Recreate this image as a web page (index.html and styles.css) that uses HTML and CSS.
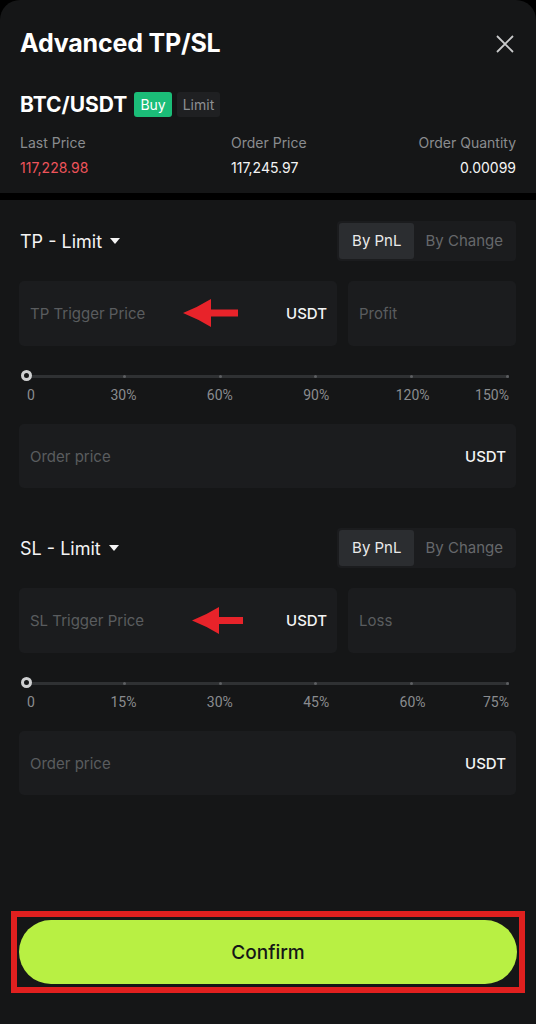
FILE: index.html
```html
<!DOCTYPE html>
<html lang="en">
<head>
    <meta charset="UTF-8">
    <meta name="viewport" content="width=device-width, initial-scale=1.0">
    <title>Advanced TP/SL</title>
    <link rel="stylesheet" href="styles.css">
</head>
<body>
    <!-- Header of the sheet -->
    <header class="sheet-head">
        <div class="title-row">
            <h1>Advanced TP/SL</h1>
            <button class="close" aria-label="Close">
                <svg width="18" height="18" viewBox="0 0 18 18"><path d="M1 1 L17 17 M17 1 L1 17" stroke="#c9cacb" stroke-width="1.8" fill="none"/></svg>
            </button>
        </div>
        <div class="pair">
            <span class="symbol">BTC/USDT</span>
            <span class="tag buy">Buy</span>
            <span class="tag">Limit</span>
        </div>
        <div class="stats">
            <div class="stat">
                <div class="stat-label">Last Price</div>
                <div class="stat-value red">117,228.98</div>
            </div>
            <div class="stat">
                <div class="stat-label">Order Price</div>
                <div class="stat-value">117,245.97</div>
            </div>
            <div class="stat right">
                <div class="stat-label">Order Quantity</div>
                <div class="stat-value">0.00099</div>
            </div>
        </div>
    </header>

    <div class="sep"></div>

    <main class="form">
        <!-- Take profit -->
        <section class="block">
            <div class="block-head">
                <div class="type">TP - Limit <span class="caret"></span></div>
                <div class="seg"><span class="on">By PnL</span><span>By Change</span></div>
            </div>
            <div class="inputs">
                <div class="field">
                    <span class="ph">TP Trigger Price</span>
                    <span class="unit">USDT</span>
                    <svg class="mark tp-mark" width="55" height="28" viewBox="0 0 55 28"><path d="M0 14 Q15 8 28 0 L28 10.5 L55 10.5 L55 17.5 L28 17.5 L28 28 Q15 20 0 14 Z" fill="#e8232a"/></svg>
                </div>
                <div class="field small"><span class="ph">Profit</span></div>
            </div>
            <div class="slider">
                <div class="track">
                    <i></i><i></i><i></i><i></i><i></i><i></i>
                    <span class="thumb"></span>
                </div>
                <div class="marks">
                    <span>0</span><span>30%</span><span>60%</span><span>90%</span><span>120%</span><span>150%</span>
                </div>
            </div>
            <div class="field">
                <span class="ph">Order price</span>
                <span class="unit">USDT</span>
            </div>
        </section>

        <!-- Stop loss -->
        <section class="block">
            <div class="block-head">
                <div class="type">SL - Limit <span class="caret"></span></div>
                <div class="seg"><span class="on">By PnL</span><span>By Change</span></div>
            </div>
            <div class="inputs">
                <div class="field">
                    <span class="ph">SL Trigger Price</span>
                    <span class="unit">USDT</span>
                    <svg class="mark sl-mark" width="51" height="27" viewBox="0 0 51 27"><path d="M0 13.5 Q14 8 27 0 L27 10 L51 10 L51 17 L27 17 L27 27 Q14 19 0 13.5 Z" fill="#e8232a"/></svg>
                </div>
                <div class="field small"><span class="ph">Loss</span></div>
            </div>
            <div class="slider">
                <div class="track">
                    <i></i><i></i><i></i><i></i><i></i><i></i>
                    <span class="thumb"></span>
                </div>
                <div class="marks">
                    <span>0</span><span>15%</span><span>30%</span><span>45%</span><span>60%</span><span>75%</span>
                </div>
            </div>
            <div class="field">
                <span class="ph">Order price</span>
                <span class="unit">USDT</span>
            </div>
        </section>
    </main>

    <footer class="foot">
        <div class="highlight">
            <button class="confirm">Confirm</button>
        </div>
    </footer>
</body>
</html>
```

FILE: styles.css
```css
html {
    background: #000;
}
body {
    margin: 0;
    min-height: 1024px;
    display: flex;
    flex-direction: column;
    font-family: 'Inter', 'Liberation Sans', sans-serif;
    color: #f2f2f2;
    background: #151617;
    border-radius: 20px 20px 0 0;
}

/* Header */
.sheet-head {
    padding: 26px 20px 0;
    height: 167px;
}
.title-row {
    display: flex;
    justify-content: space-between;
    align-items: center;
    height: 34px;
}
h1 {
    margin: 0;
    font-size: 25px;
    font-weight: 700;
    letter-spacing: -0.2px;
    color: #fff;
}
.close {
    background: none;
    border: none;
    padding: 0;
    margin-right: 2px;
    margin-top: 2px;
    width: 18px;
    height: 18px;
}
.pair {
    display: flex;
    align-items: center;
    gap: 5px;
    margin-top: 32px;
    height: 25px;
}
.symbol {
    font-size: 21px;
    font-weight: 700;
    color: #fff;
    margin-right: 2px;
}
.tag {
    height: 25px;
    line-height: 25px;
    padding: 0 6px;
    border-radius: 3px;
    font-size: 14px;
    color: #8d8f92;
    background: #1f2022;
}
.tag.buy {
    background: #1bbd78;
    color: #fff;
}
.stats {
    display: grid;
    grid-template-columns: 211px 1fr auto;
    margin-top: 16px;
}
.stat-label {
    font-size: 14px;
    line-height: 20px;
    color: #8a8c8f;
}
.stat-value {
    font-size: 14px;
    line-height: 20px;
    margin-top: 5px;
    color: #f4f4f4;
}
.stat-value.red {
    color: #ee545b;
}
.stat.right {
    text-align: right;
}

.sep {
    height: 7px;
    background: #000;
}

/* Form blocks */
.form {
    padding: 21px 20px 0 19px;
}
.block + .block {
    margin-top: 40px;
}
.block-head {
    display: flex;
    justify-content: space-between;
    align-items: center;
    height: 40px;
}
.type {
    display: flex;
    align-items: center;
    font-size: 18px;
    color: #f4f4f4;
    padding-left: 1px;
}
.caret {
    display: inline-block;
    margin-left: 8px;
    width: 0;
    height: 0;
    border-left: 5px solid transparent;
    border-right: 5px solid transparent;
    border-top: 6px solid #f4f4f4;
}
.seg {
    display: flex;
    height: 40px;
    padding: 2px;
    box-sizing: border-box;
    border-radius: 4px;
    background: #1b1c1e;
}
.seg span {
    padding: 0 11px;
    line-height: 36px;
    font-size: 15px;
    color: #66686b;
    border-radius: 3px;
}
.seg span.on {
    padding: 0 13px;
    background: #2b2d30;
    color: #eaeaea;
}

.inputs {
    display: flex;
    gap: 11px;
    margin-top: 20px;
}
.field {
    position: relative;
    display: flex;
    justify-content: space-between;
    align-items: center;
    height: 64px;
    padding: 0 10px 0 11px;
    border-radius: 5px;
    background: #1b1c1e;
}
.inputs .field {
    flex: 1;
    height: 65px;
}
.inputs .field.small {
    flex: 0 0 168px;
    box-sizing: border-box;
}
.ph {
    font-size: 15px;
    color: #5a5c5f;
}
.unit {
    font-size: 15px;
    font-weight: 500;
    color: #f4f4f4;
}

/* red arrows drawn over the inputs */
.mark {
    position: absolute;
}
.tp-mark {
    left: 164px;
    top: 18px;
}
.sl-mark {
    left: 173px;
    top: 19px;
}

/* Slider */
.slider {
    padding: 24px 7px 21px 8px;
}
.track {
    position: relative;
    display: flex;
    justify-content: space-between;
    align-items: center;
    height: 12px;
}
.track::before {
    content: '';
    position: absolute;
    left: 0;
    right: 0;
    top: 5px;
    height: 3px;
    background: #2f3133;
}
.track i {
    position: relative;
    width: 3px;
    height: 3px;
    border-radius: 50%;
    background: #5d5f62;
}
.thumb {
    position: absolute;
    left: -6px;
    top: 0;
    width: 5px;
    height: 5px;
    border: 3.5px solid #cfd0d1;
    border-radius: 50%;
    background: #151617;
}
.marks {
    display: flex;
    justify-content: space-between;
    margin-top: 5px;
    height: 16px;
    font-family: 'Roboto', 'Liberation Sans', sans-serif;
    font-size: 14px;
    line-height: 16px;
    color: #8a8c8f;
}
.marks span {
    width: 0;
    display: flex;
    justify-content: center;
    white-space: nowrap;
}
.marks span:first-child {
    justify-content: flex-start;
}
.marks span:last-child {
    justify-content: flex-end;
}

/* Footer */
.foot {
    margin-top: auto;
    padding: 0 11px 31px;
}
.highlight {
    border: 6px solid #e0201f;
    padding: 3px 2px;
}
.confirm {
    display: block;
    width: 100%;
    height: 64px;
    border: none;
    border-radius: 32px;
    background: #b8f043;
    font-family: 'Inter', 'Liberation Sans', sans-serif;
    font-size: 19px;
    font-weight: 500;
    color: #151617;
}
```
